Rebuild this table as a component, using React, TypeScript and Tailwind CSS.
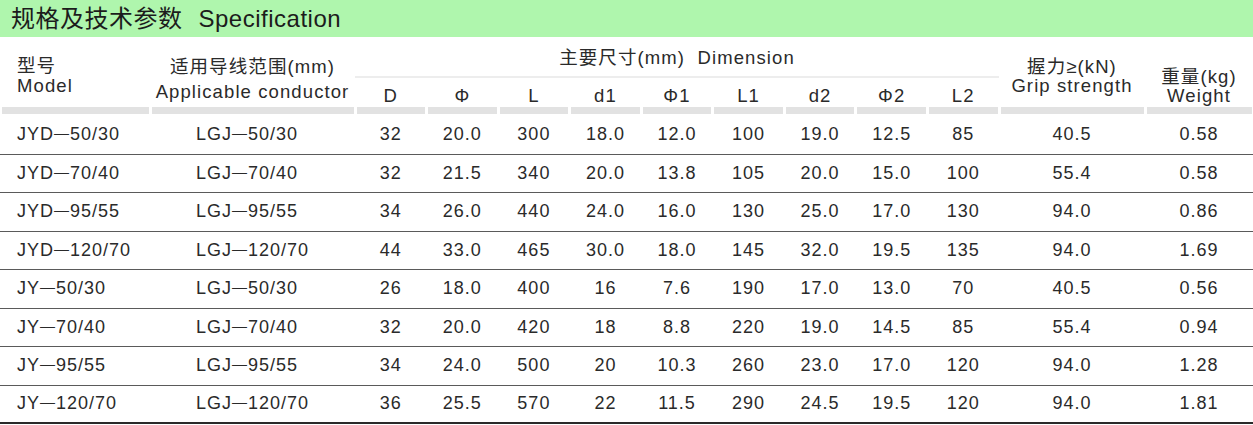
const rows = [
  ['JYD-50/30', 'LGJ-50/30', '32', '20.0', '300', '18.0', '12.0', '100', '19.0', '12.5', '85', '40.5', '0.58'],
  ['JYD-70/40', 'LGJ-70/40', '32', '21.5', '340', '20.0', '13.8', '105', '20.0', '15.0', '100', '55.4', '0.58'],
  ['JYD-95/55', 'LGJ-95/55', '34', '26.0', '440', '24.0', '16.0', '130', '25.0', '17.0', '130', '94.0', '0.86'],
  ['JYD-120/70', 'LGJ-120/70', '44', '33.0', '465', '30.0', '18.0', '145', '32.0', '19.5', '135', '94.0', '1.69'],
  ['JY-50/30', 'LGJ-50/30', '26', '18.0', '400', '16', '7.6', '190', '17.0', '13.0', '70', '40.5', '0.56'],
  ['JY-70/40', 'LGJ-70/40', '32', '20.0', '420', '18', '8.8', '220', '19.0', '14.5', '85', '55.4', '0.94'],
  ['JY-95/55', 'LGJ-95/55', '34', '24.0', '500', '20', '10.3', '260', '23.0', '17.0', '120', '94.0', '1.28'],
  ['JY-120/70', 'LGJ-120/70', '36', '25.5', '570', '22', '11.5', '290', '24.5', '19.5', '120', '94.0', '1.81'],
];

const dims = ['D', 'Φ', 'L', 'd1', 'Φ1', 'L1', 'd2', 'Φ2', 'L2'];

const cols = 'grid grid-cols-[150px_205px_repeat(9,minmax(0,1fr))_146px_108px]';

// model codes use a long dash in the print
function Code({ text }: { text: string }) {
  const [a, b] = text.split('-');
  return (
    <>
      {a}
      <span className="text-[15px] align-[2px]">—</span>
      {b}
    </>
  );
}

export default function App() {
  return (
    <div className="w-[1253px] h-[425px] overflow-hidden bg-white text-[#2a2a2a] font-['Liberation_Sans','Noto_Sans_CJK_SC',sans-serif]">
      {/* title bar */}
      <div className="h-[37px] bg-[#aff6ad] flex items-center pl-[11px] text-[24px] tracking-[0.5px] leading-none text-[#1c1c1c]">
        <span>规格及技术参数</span>
        <span className="ml-[16px]">Specification</span>
      </div>

      {/* column headings */}
      <div className={`${cols} grid-rows-[41px_29px] text-[18.5px] tracking-[1.1px]`}>
        <div className="row-span-2 pl-[17px] pt-[19px] leading-[20px]">
          <div>型号</div>
          <div>Model</div>
        </div>
        <div className="row-span-2 pt-[19px] text-center leading-[22px]">
          <div>适用导线范围(mm)</div>
          <div className="mt-[3px]">Applicable conductor</div>
        </div>
        <div className="col-span-9 border-b-2 border-[#ededed] text-center pt-[9px] leading-[24px]">
          主要尺寸(mm)&nbsp;&nbsp;Dimension
        </div>
        <div className="row-span-2 pt-[20px] text-center leading-[19px]">
          <div>握力≥(kN)</div>
          <div>Grip strength</div>
        </div>
        <div className="row-span-2 pt-[30px] text-center leading-[19px]">
          <div>重量(kg)</div>
          <div>Weight</div>
        </div>
        {dims.map((d) => (
          <div key={d} className="text-center pt-[6px] leading-[24px]">
            {d}
          </div>
        ))}
      </div>

      {/* grey stripe */}
      <div className={`${cols} h-[9px]`}>
        {Array.from({ length: 13 }).map((_, i) => (
          <div key={i} className="px-[1.5px]">
            <div className="h-[7px] bg-[#e2e2e2]" />
          </div>
        ))}
      </div>

      {/* data */}
      {rows.map((r, ri) => (
        <div
          key={ri}
          className={`${cols} h-[38.5px] items-center text-[18px] tracking-[1px] ${
            ri === rows.length - 1 ? 'border-b-2 border-[#2a2a2a]' : 'border-b border-[#5a5a5a]'
          }`}
        >
          {r.map((c, ci) => (
            <div
              key={ci}
              className={ci === 0 ? 'pl-[17px]' : ci === 1 ? 'pl-[46px]' : 'text-center'}
            >
              {ci < 2 ? <Code text={c} /> : c}
            </div>
          ))}
        </div>
      ))}
    </div>
  );
}
